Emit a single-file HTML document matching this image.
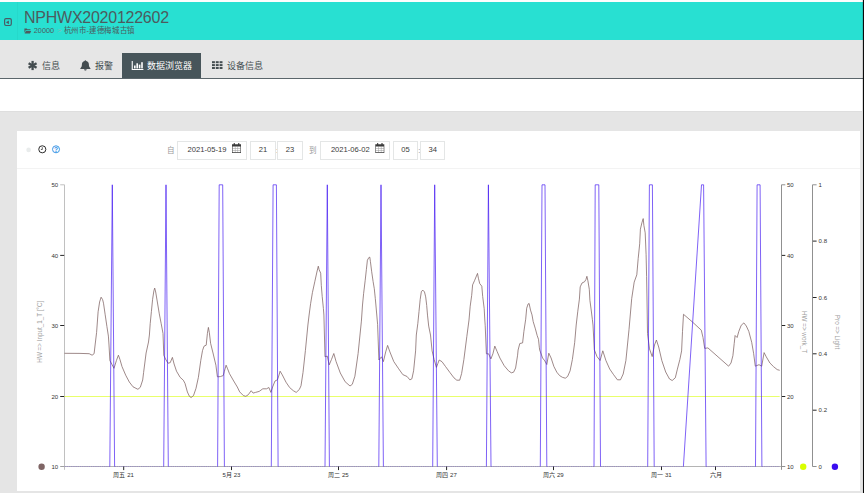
<!DOCTYPE html>
<html lang="zh-CN">
<head>
<meta charset="utf-8">
<title>NPHWX2020122602</title>
<style>
*{box-sizing:border-box;margin:0;padding:0}
html,body{width:864px;height:493px;overflow:hidden;background:#e5e5e5;font-family:"Liberation Sans",sans-serif;color:#555}
#top{position:absolute;left:0;top:0;width:864px;height:2px;background:#fdfdfd}
#hdr{position:absolute;left:0;top:2px;width:864px;height:38px;background:#28e0d2}
#hdr .div{position:absolute;left:17px;top:0;width:1px;height:38px;background:#26d9cb}
#title{position:absolute;left:24px;top:7px;font-size:16px;line-height:18px;color:#4d5b5e;white-space:nowrap;letter-spacing:-0.25px}
#crumb{position:absolute;left:0;top:24.3px;font-size:7.3px;line-height:9px;color:#4d5b5e;white-space:nowrap}
#crumb span{position:absolute;top:0}
#crumb i{font-style:normal;color:#7fbdb8}
#nav{position:absolute;left:0;top:40px;width:864px;height:38px;background:#e6e6e6}
#navline{position:absolute;left:0;top:77.5px;width:864px;height:1.5px;background:#5b666b}
.tab{position:absolute;top:13px;height:24.5px;font-size:9px;line-height:27.6px;color:#444d50;white-space:nowrap}
.tab.act{background:#47555a;color:#fff}
#band{position:absolute;left:0;top:79px;width:864px;height:33px;background:#fff;border-bottom:1px solid #dedede}
#panel{position:absolute;left:17px;top:130.5px;width:843px;height:360px;background:#fff}
#phead{position:absolute;left:0;top:0;width:843px;height:38.5px;border-bottom:1px solid #f3f3f3}
.inp{position:absolute;top:141px;height:18.5px;border:1px solid #e4e6e6;background:#fff;font-size:7.6px;line-height:16.6px;color:#3a3a3a;text-align:center;white-space:nowrap}
.lbl{position:absolute;top:146px;font-size:7.5px;line-height:10px;color:#999}
#edge{position:absolute;left:863px;top:0;width:1px;height:493px;background:#0a0a0a;box-shadow:-1px 0 0 rgba(0,0,0,0.12)}
#edge2{position:absolute;left:862px;top:79px;width:1px;height:414px;background:#fbfbfb}
#chart,#icons{position:absolute;left:0;top:0}
</style>
</head>
<body>
<div id="top"></div>
<div id="hdr">
  <div class="div"></div>
  <div id="title">NPHWX2020122602</div>
  <div id="crumb"><span style="left:33.8px">20000</span><span style="left:57.3px"><i>&gt;</i></span><span style="left:63.8px;font-size:7.45px;letter-spacing:0.53px">杭州市-建德梅城古镇</span></div>
</div>
<div id="nav">
  <div class="tab" style="left:42.3px">信息</div>
  <div class="tab" style="left:94.5px">报警</div>
  <div class="tab act" style="left:121.5px;width:79.3px;padding-left:25.6px">数据浏览器</div>
  <div class="tab" style="left:227px">设备信息</div>
</div>
<div id="navline"></div>
<div id="band"></div>
<div id="panel">
  <div id="phead"></div>
</div>
<div class="lbl" style="left:166.8px">自</div>
<div class="inp" style="left:177px;width:69.8px;text-align:left;padding-left:9.6px">2021-05-19</div>
<div class="inp" style="left:250px;width:25.8px">21</div>
<div class="lbl" style="left:276px;color:#777">:</div>
<div class="inp" style="left:277.3px;width:25.5px">23</div>
<div class="lbl" style="left:309.4px">到</div>
<div class="inp" style="left:320.3px;width:69.8px;text-align:left;padding-left:9.6px">2021-06-02</div>
<div class="inp" style="left:393.3px;width:24.5px">05</div>
<div class="lbl" style="left:418.3px;color:#777">:</div>
<div class="inp" style="left:420.3px;width:24.7px">34</div>
<div id="edge2"></div>
<div id="edge"></div>
<svg id="icons" width="864" height="493" viewBox="0 0 864 493">
<!-- sidebar toggle -->
<rect x="4.6" y="18.65" width="6.7" height="6.8" rx="1.4" fill="none" stroke="#4a5a64" stroke-width="1.15"/>
<path d="M8.9,20.4V24.2L5.9,22.3Z" fill="#4a5a64"/>
<!-- folder -->
<path d="M24.4,28.6h2.3l0.6,0.7h3.2v1H25.6l-1.2,2.6Z M25.9,30.9h5.3l-1.2,2.5h-5.4Z" fill="#4d5b5e"/>
<!-- asterisk -->
<g stroke="#444d50" stroke-width="2.3" stroke-linecap="butt">
<path d="M32.6,60.9V70.1"/><path d="M28.6,63.2L36.6,67.8"/><path d="M36.6,63.2L28.6,67.8"/>
</g>
<!-- bell -->
<path d="M85.4,60.2c0.5,0 0.8,0.3 0.8,0.8c1.8,0.4 2.7,1.9 2.7,3.6c0,1.8 0.5,2.9 1.6,3.8v0.6h-10.2v-0.6c1.1,-0.9 1.6,-2 1.6,-3.8c0,-1.7 0.9,-3.2 2.7,-3.6c0,-0.5 0.3,-0.8 0.8,-0.8Z M84.1,69.3h2.6c0,0.8 -0.6,1.3 -1.3,1.3c-0.7,0 -1.3,-0.5 -1.3,-1.3Z" fill="#444d50"/>
<!-- bar chart -->
<g fill="#fff">
<path d="M131.7,61h1.1v7.9h10.6v1.1h-11.7Z"/>
<rect x="134" y="65.5" width="1.6" height="2.9"/>
<rect x="136.4" y="63.3" width="1.6" height="5.1"/>
<rect x="138.8" y="64.6" width="1.6" height="3.8"/>
<rect x="141.2" y="62.2" width="1.6" height="6.2"/>
</g>
<!-- grid -->
<g fill="#444d50">
<rect x="212" y="61.2" width="2.9" height="2"/><rect x="215.8" y="61.2" width="2.9" height="2"/><rect x="219.6" y="61.2" width="2.9" height="2"/>
<rect x="212" y="64.1" width="2.9" height="2"/><rect x="215.8" y="64.1" width="2.9" height="2"/><rect x="219.6" y="64.1" width="2.9" height="2"/>
<rect x="212" y="67" width="2.9" height="2"/><rect x="215.8" y="67" width="2.9" height="2"/><rect x="219.6" y="67" width="2.9" height="2"/>
</g>
<!-- toolbar icons -->
<circle cx="28.6" cy="149.9" r="2.3" fill="#e9ecec"/>
<circle cx="42.3" cy="149.3" r="3.55" fill="none" stroke="#222" stroke-width="0.95"/>
<path d="M42.3,147.2V149.5H40.9" fill="none" stroke="#222" stroke-width="0.7"/>
<circle cx="56" cy="149.3" r="3.5" fill="none" stroke="#3c97e6" stroke-width="1"/>
<text x="56" y="151.6" font-family="Liberation Sans, sans-serif" font-weight="bold" font-size="6.6" fill="#2c8ce6" text-anchor="middle">?</text>
<!-- calendars -->
<g fill="#3a3a3a">
<path d="M232,144.2h9v8.7h-9Z M232.55,146.5v5.85h7.9v-5.85Z" fill-rule="evenodd"/>
<rect x="233.7" y="143" width="1.2" height="2.2" rx="0.5"/><rect x="238.1" y="143" width="1.2" height="2.2" rx="0.5"/>
<path d="M234.9,146.5h0.45v5.85h-0.45Z M237.6,146.5h0.45v5.85h-0.45Z M232.55,148.3h7.9v0.4h-7.9Z M232.55,150.3h7.9v0.4h-7.9Z" opacity="0.55"/>
</g>
<g fill="#3a3a3a" transform="translate(143.3,0)">
<path d="M232,144.2h9v8.7h-9Z M232.55,146.5v5.85h7.9v-5.85Z" fill-rule="evenodd"/>
<rect x="233.7" y="143" width="1.2" height="2.2" rx="0.5"/><rect x="238.1" y="143" width="1.2" height="2.2" rx="0.5"/>
<path d="M234.9,146.5h0.45v5.85h-0.45Z M237.6,146.5h0.45v5.85h-0.45Z M232.55,148.3h7.9v0.4h-7.9Z M232.55,150.3h7.9v0.4h-7.9Z" opacity="0.55"/>
</g>
</svg>

<svg id="chart" width="864" height="493" viewBox="0 0 864 493">
<g fill="none" stroke-width="1">
<path d="M60.2,184.8H64.5V469.8" stroke="#c0c0c0"/>
<path d="M60.2,466.5H64.5" stroke="#a0a0a0"/>
<path d="M64.5,466.5H781.5" stroke="#b4b4b4"/>
<path d="M781.5,466.5H785.3" stroke="#909090"/>
<path d="M785.3,184.8H781.5V469.8" stroke="#909090"/>
<path d="M816.6,184.8H812.5V466.5H816.6" stroke="#909090"/>
</g>
<g stroke="#1a1a1a" stroke-width="0.95">
<path d="M60.2,396.5H64.2"/>
<path d="M781.9,396.5H785.3"/>
<path d="M60.2,325.5H64.2"/>
<path d="M781.9,325.5H785.3"/>
<path d="M60.2,255.4H64.2"/>
<path d="M781.9,255.4H785.3"/>
<path d="M812.9,410.2H816.6"/>
<path d="M812.9,353.8H816.6"/>
<path d="M812.9,297.5H816.6"/>
<path d="M812.9,241.1H816.6"/>
<path d="M123.7,466.5V470.1"/>
<path d="M231.5,466.5V470.1"/>
<path d="M338.5,466.5V470.1"/>
<path d="M446.6,466.5V470.1"/>
<path d="M553.5,466.5V470.1"/>
<path d="M661.5,466.5V470.1"/>
<path d="M715.5,466.5V470.1"/>
</g>
<g font-family="Liberation Sans, sans-serif" font-size="6.05" fill="#333">
<text x="58.2" y="468.6" text-anchor="end">10</text>
<text x="787" y="468.6">10</text>
<text x="58.2" y="398.6" text-anchor="end">20</text>
<text x="787" y="398.6">20</text>
<text x="58.2" y="327.6" text-anchor="end">30</text>
<text x="787" y="327.6">30</text>
<text x="58.2" y="257.5" text-anchor="end">40</text>
<text x="787" y="257.5">40</text>
<text x="58.2" y="186.9" text-anchor="end">50</text>
<text x="787" y="186.9">50</text>
<text x="818.6" y="468.6">0</text>
<text x="818.6" y="412.3">0.2</text>
<text x="818.6" y="355.9">0.4</text>
<text x="818.6" y="299.6">0.6</text>
<text x="818.6" y="243.2">0.8</text>
<text x="818.6" y="186.9">1</text>
<text x="123.7" y="477.2" text-anchor="middle">周五 21</text>
<text x="231.5" y="477.2" text-anchor="middle">5月 23</text>
<text x="338.5" y="477.2" text-anchor="middle">周二 25</text>
<text x="446.6" y="477.2" text-anchor="middle">周四 27</text>
<text x="553.5" y="477.2" text-anchor="middle">周六 29</text>
<text x="661.5" y="477.2" text-anchor="middle">周一 31</text>
<text x="715.5" y="477.2" text-anchor="middle">六月</text>
</g>
<g font-family="Liberation Sans, sans-serif" font-size="6.3" fill="#9e9e9e" text-anchor="middle">
<text transform="translate(42.0,331.7) rotate(-90)">HW =&gt; Input_1_T [°C]</text>
<text transform="translate(802.3,332) rotate(90)">HW =&gt; work_T</text>
<text transform="translate(835.2,332) rotate(90)">Pro =&gt; Light</text>
</g>
<path d="M64.5,396.5H779.7" stroke="#dbff10" stroke-width="0.62" fill="none"/>
<polyline points="64.5,353.3 80.0,353.4 89.2,353.7 92.1,355.2 94.1,353.7 95.1,345.0 96.6,332.4 98.1,311.8 99.6,302.0 101.1,297.2 102.6,299.6 103.5,303.2 105.1,314.2 106.9,326.4 108.4,336.1 109.0,345.0 109.9,360.6 111.8,364.2 114.0,368.3 116.4,360.6 118.4,355.2 119.9,359.3 122.0,366.6 125.7,375.2 129.3,382.0 133.0,386.8 137.9,389.3 140.3,387.3 142.7,380.0 143.6,372.5 146.1,353.0 148.5,342.0 149.4,335.0 150.2,323.7 151.4,311.5 152.6,299.3 153.9,290.8 154.7,288.1 155.7,292.0 157.5,303.0 159.3,313.9 161.2,323.7 163.0,333.4 163.8,355.4 165.5,359.0 168.0,363.2 170.2,362.7 172.4,357.4 174.1,364.0 176.5,371.2 180.1,377.3 183.3,380.2 185.0,383.4 187.4,392.0 189.4,396.3 191.1,397.5 193.5,395.6 196.0,388.3 198.4,377.3 200.8,360.3 202.5,350.6 204.0,346.2 206.2,345.2 207.4,333.5 208.4,327.4 209.3,332.3 210.6,343.3 213.0,353.0 215.9,365.2 217.4,376.8 220.3,376.6 223.2,375.6 224.4,371.2 226.1,365.2 227.6,368.8 229.5,373.7 233.7,381.0 237.3,387.0 239.7,391.9 243.4,395.6 245.8,396.3 248.2,394.8 251.2,390.7 253.1,393.1 255.5,392.4 259.2,391.4 262.8,388.8 266.5,388.8 268.9,387.5 270.9,392.4 272.6,387.0 275.0,381.0 277.4,379.8 278.7,376.1 280.1,371.2 282.3,374.9 286.0,382.2 289.6,387.5 293.3,390.7 296.2,392.4 299.3,389.5 301.0,385.8 303.0,372.5 305.4,350.6 307.9,325.0 309.1,315.0 310.6,303.7 312.4,292.7 314.9,281.2 316.9,272.0 318.3,266.2 319.1,269.6 320.7,273.2 321.3,285.4 322.2,296.4 323.4,308.5 323.9,315.0 325.0,356.8 327.3,356.1 329.2,364.9 331.5,359.4 333.8,353.5 336.1,361.6 340.3,373.0 345.1,381.7 350.0,386.0 352.3,384.3 354.9,376.2 358.1,353.5 361.4,321.1 362.5,305.0 363.6,293.7 365.2,280.3 366.4,269.3 367.4,260.2 368.9,257.5 369.8,257.2 370.4,261.4 371.7,271.8 373.1,281.5 374.3,288.8 375.3,298.5 375.9,305.0 377.6,324.3 378.9,360.0 381.5,356.8 383.4,361.6 385.7,351.9 387.6,345.4 389.9,351.9 393.8,361.6 398.7,368.8 402.8,374.6 407.1,376.5 409.9,379.9 411.9,378.8 413.6,370.8 415.6,350.9 416.3,335.0 417.8,323.7 419.0,311.5 420.2,299.3 421.4,291.4 423.0,290.2 424.5,292.0 425.7,296.9 426.7,305.4 427.5,315.1 428.7,326.1 430.5,335.0 432.1,350.9 434.1,359.4 436.4,367.4 437.8,363.7 439.2,360.0 442.0,361.7 445.5,366.5 449.7,372.2 454.0,377.9 456.8,380.2 459.7,380.2 461.6,373.6 463.9,359.4 466.8,336.7 469.0,320.0 470.2,306.2 471.7,295.3 472.6,284.9 474.5,280.7 477.5,273.4 478.4,278.2 479.7,283.5 481.8,286.2 482.7,296.5 484.2,308.7 484.8,320.0 485.2,325.3 486.4,353.8 488.6,353.8 490.9,358.9 492.9,353.8 494.8,346.1 497.1,351.5 499.9,358.0 504.2,365.7 508.5,370.8 511.3,372.8 513.6,372.2 515.6,368.0 517.6,355.2 518.1,350.0 519.8,343.5 522.6,342.9 523.9,331.4 525.7,319.2 526.7,308.2 528.1,304.0 529.1,303.4 530.5,310.1 532.0,314.9 533.2,321.6 535.4,328.9 537.2,335.6 538.5,339.3 539.3,347.2 539.7,350.0 542.6,358.0 544.8,360.9 546.8,364.5 548.8,353.2 551.1,358.0 553.9,366.5 556.8,372.2 559.6,375.6 562.4,377.3 565.3,378.2 567.6,376.5 570.1,370.8 572.4,359.4 574.7,342.4 576.2,325.0 577.8,311.2 579.4,299.1 580.2,286.9 582.0,283.0 584.5,281.8 585.9,279.6 586.9,276.3 587.9,280.8 589.3,289.3 589.9,300.3 591.2,310.0 592.4,319.7 593.0,325.0 594.3,349.7 597.0,356.6 600.1,360.5 602.8,350.8 605.9,360.5 609.7,369.0 613.6,374.7 617.4,379.8 620.5,379.8 623.2,374.0 625.9,360.5 629.0,329.6 631.7,298.7 634.2,282.1 636.8,274.8 638.2,258.4 639.7,243.8 640.4,229.2 641.9,222.8 643.2,218.6 643.9,225.5 645.2,232.8 646.1,254.7 646.6,276.6 647.0,300.0 647.5,333.5 649.5,348.9 652.2,356.6 654.5,345.0 656.4,340.0 658.7,347.0 661.8,360.5 665.7,372.0 669.5,379.0 672.2,380.5 675.3,377.8 677.4,369.1 679.9,359.4 681.6,350.9 682.5,331.4 683.5,314.3 692.0,321.6 701.3,330.2 703.0,337.5 704.7,348.4 707.9,347.9 728.6,366.2 731.0,363.0 732.9,355.7 734.2,343.6 735.1,335.5 737.1,337.5 738.8,331.4 741.2,325.3 743.9,322.9 746.3,326.0 748.8,331.4 751.7,342.3 753.6,353.3 755.3,366.2 759.0,364.7 761.7,366.2 764.1,352.6 766.3,356.9 769.9,363.0 773.6,366.7 777.2,369.6 779.7,370.3" fill="none" stroke="#7d6262" stroke-width="0.75" stroke-linejoin="round"/>
<path d="M64.5,466.5H109.8M114.6,466.5H163.7M168.3,466.5H217.6M224.4,466.5H271.3M278.1,466.5H325.0M329.4,466.5H378.8M383.4,466.5H432.7M437.3,466.5H486.4M491.0,466.5H540.3M546.8,466.5H594.0M600.5,466.5H647.7M654.2,466.5H683.4M706.1,466.5H755.5M761.9,466.5H779.7" fill="none" stroke="#3c10f2" stroke-width="0.9" stroke-opacity="0.24" stroke-dasharray="1.3 0.9"/>
<path d="M109.8,466.5L112.3,184.8L114.6,466.5M163.7,466.5L166.0,184.8L168.3,466.5M217.6,466.5L219.2,184.8L222.7,184.8L224.4,466.5M271.3,466.5L273.1,184.8L276.4,184.8L278.1,466.5M325.0,466.5L327.3,184.8L329.4,466.5M378.8,466.5L381.0,184.8L383.4,466.5M432.7,466.5L434.7,184.8L437.3,466.5M486.4,466.5L488.4,184.8L491.0,466.5M540.3,466.5L542.0,184.8L545.0,184.8L546.8,466.5M594.0,466.5L595.2,184.8L598.8,184.8L600.5,466.5M647.7,466.5L649.4,184.8L652.4,184.8L654.2,466.5M683.4,466.5L701.5,184.8L703.6,184.8L706.1,466.5M755.5,466.5L757.1,184.8L760.1,184.8L761.9,466.5" fill="none" stroke="#3c10f2" stroke-width="0.66" stroke-linejoin="round"/>
<circle cx="41.6" cy="466.7" r="3.2" fill="#7f6565"/>
<circle cx="803.2" cy="466.7" r="3.2" fill="#d9ff00"/>
<circle cx="834.9" cy="466.7" r="3.2" fill="#3a0cf0"/>
</svg>
</body>
</html>
